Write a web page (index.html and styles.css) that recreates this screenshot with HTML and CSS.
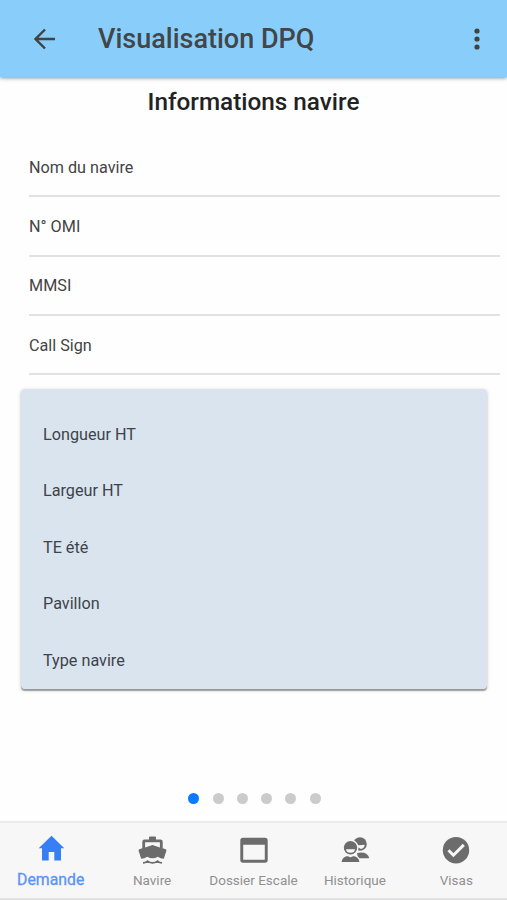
FILE: index.html
```html
<!DOCTYPE html>
<html lang="fr">
<head>
  <meta charset="UTF-8">
  <title>Visualisation DPQ</title>
  <link rel="stylesheet" href="styles.css">
</head>
<body>
  <!-- Barre de titre -->
  <header class="toolbar">
    <svg class="back" viewBox="0 0 22 22">
      <path d="M21 11H2M11 1.5L1.5 11L11 20.5" fill="none" stroke="#424242" stroke-width="2.4"/>
    </svg>
    <h1 class="title">Visualisation DPQ</h1>
    <svg class="more" viewBox="0 0 6 22">
      <circle cx="3" cy="3" r="2.6"/>
      <circle cx="3" cy="11" r="2.6"/>
      <circle cx="3" cy="19" r="2.6"/>
    </svg>
  </header>

  <main class="content">
    <h2 class="heading"><span>Informations navire</span></h2>

    <ul class="list">
      <li><span>Nom du navire</span></li>
      <li><span>N° OMI</span></li>
      <li><span>MMSI</span></li>
      <li><span>Call Sign</span></li>
    </ul>

    <div class="card">
      <div class="card-item">Longueur HT</div>
      <div class="card-item">Largeur HT</div>
      <div class="card-item">TE été</div>
      <div class="card-item">Pavillon</div>
      <div class="card-item">Type navire</div>
    </div>

    <!-- Pagination du slider -->
    <div class="pager">
      <span class="dot active"></span>
      <span class="dot"></span>
      <span class="dot"></span>
      <span class="dot"></span>
      <span class="dot"></span>
      <span class="dot"></span>
    </div>
  </main>

  <!-- Onglets -->
  <nav class="tabs">
    <a class="tab active">
      <svg viewBox="0 0 30 30">
        <path d="M15.5 .7L28.3 13.3H25V25.5H18.3V17H12.7V25.5H6V13.3H2.7Z"/>
      </svg>
      <span>Demande</span>
    </a>
    <a class="tab">
      <svg viewBox="0 0 30 30">
        <path fill-rule="evenodd" d="M12 4.5V2.5Q12 1.5 13 1.5H18Q19 1.5 19 2.5V4.5H23.5Q25.7 4.5 25.7 6.7V13.3L28.7 14.3Q29.7 14.7 29.4 15.8L26.8 23.7Q23.5 23.7 20.8 21.7Q15.5 25 10.2 21.7Q7.5 23.7 4.2 23.7L1.6 15.8Q1.3 14.7 2.3 14.3L5.3 13.3V6.7Q5.3 4.5 7.5 4.5ZM8.1 7.3V12.4L15.5 10L22.9 12.4V7.3Z"/>
        <path d="M6 27.8Q8.5 27.8 10.5 26.1Q15.5 29.5 20.5 26.1Q22.5 27.8 25 27.8" fill="none" stroke="currentColor" stroke-width="1.7"/>
      </svg>
      <span>Navire</span>
    </a>
    <a class="tab">
      <svg viewBox="0 0 30 30">
        <path fill-rule="evenodd" d="M4 2.7H26Q28.7 2.7 28.7 5.4V25Q28.7 27.7 26 27.7H4Q1.3 27.7 1.3 25V5.4Q1.3 2.7 4 2.7ZM4.2 9.7V24.8H25.8V9.7Z"/>
      </svg>
      <span>Dossier Escale</span>
    </a>
    <a class="tab">
      <svg viewBox="0 0 30 30">
        <!-- personne en arrière-plan -->
        <circle cx="20" cy="9" r="6.8"/>
        <path class="face" d="M15.5 10.5L24.7 9.8Q24.6 13.4 20.8 13.9Z"/>
        <path d="M17 18Q27.5 16 29.3 23.2H18Z"/>
        <!-- personne au premier plan -->
        <circle class="outline" cx="10.5" cy="12.8" r="7.4"/>
        <path class="face" d="M6 14.3H15Q14.5 17.8 10.5 17.8Q6.5 17.8 6 14.3Z"/>
        <path class="outline" d="M.6 27.8Q1.6 21.2 7.4 20.4L10.5 21.6L13.6 20.4Q19.4 21.2 20.4 27.8Z"/>
      </svg>
      <span>Historique</span>
    </a>
    <a class="tab">
      <svg viewBox="0 0 30 30">
        <circle cx="15" cy="15.2" r="13.2"/>
        <path class="check" d="M7.5 15.2L12.4 20.2L22.8 9.9"/>
      </svg>
      <span>Visas</span>
    </a>
  </nav>
</body>
</html>
```
FILE: styles.css
```css
* {
  box-sizing: border-box;
}
body {
  display: flex;
  flex-direction: column;
  height: 900px;
  margin: 0;
  background: #fefefe;
  font-family: Roboto, "Liberation Sans", sans-serif;
  color: #444;
  overflow: hidden;
}
/* Barre de titre */
.toolbar {
  display: flex;
  align-items: center;
  height: 77px;
  padding: 0 27px 0 34px;
  background: #89cefb;
  box-shadow: 0 1px 4px rgba(0, 0, 0, 0.45);
}
.back {
  width: 22px;
  height: 22px;
}
.title {
  flex: 1;
  margin: 1px 0 0 42px;
  font-size: 27px;
  font-weight: 500;
  line-height: 32px;
  color: #424648;
}
.more {
  width: 6px;
  height: 22px;
  fill: #424242;
}
.content {
  flex: 1;
  display: flex;
  flex-direction: column;
}
.heading {
  margin: 9px 0 0;
  height: 52px;
  font-size: 24.3px;
  font-weight: 500;
  line-height: 32px;
  text-align: center;
  color: #222;
}
/* Liste des champs */
.list {
  margin: 0 7px 0 29px;
  padding: 0;
  list-style: none;
  font-size: 16.2px;
}
.list li {
  display: flex;
  align-items: center;
  height: 59.3px;
  padding-top: 1px;
  border-bottom: 2px solid #e2e2e2;
}
.card {
  margin: 13.4px 20px 0 21px;
  height: 300px;
  padding: 17px 22px 0;
  border-radius: 4px;
  background: #dae4ee;
  box-shadow: 0 2px 1px rgba(0, 0, 0, 0.32), 0 1px 4px rgba(0, 0, 0, 0.18);
  font-size: 16.2px;
  color: #3d434b;
}
.card-item {
  height: 56.5px;
  line-height: 57px;
}
.pager {
  display: flex;
  justify-content: center;
  gap: 13.3px;
  margin: auto 0 17px;
  padding-left: 2px;
}
.dot {
  width: 11px;
  height: 11px;
  border-radius: 50%;
  background: #cbcbcb;
}
.dot.active {
  background: #087cff;
}
/* Onglets */
.tabs {
  display: flex;
  height: 79px;
  border-top: 2px solid #ebebeb;
  border-bottom: 2px solid #e2e2e2;
  background: #f7f7f7;
}
.tab {
  flex: 1 1 0;
  display: flex;
  flex-direction: column;
  align-items: center;
  padding-top: 12px;
  font-size: 13.5px;
  line-height: 18px;
  white-space: nowrap;
  color: #909090;
}
.tab svg {
  width: 30px;
  height: 30px;
  margin-bottom: 6px;
  fill: currentColor;
  color: #6c6c6c;
}
.tab .face {
  fill: #f7f7f7;
}
.tab .outline {
  stroke: #f7f7f7;
  stroke-width: 1.4;
}
.tab .check {
  fill: none;
  stroke: #f7f7f7;
  stroke-width: 3;
}
.tab.active {
  font-size: 15.8px;
  color: #5b93f8;
  -webkit-text-stroke: 0.3px #5b93f8;
}
.tab.active svg {
  color: #387ef5;
}
```
